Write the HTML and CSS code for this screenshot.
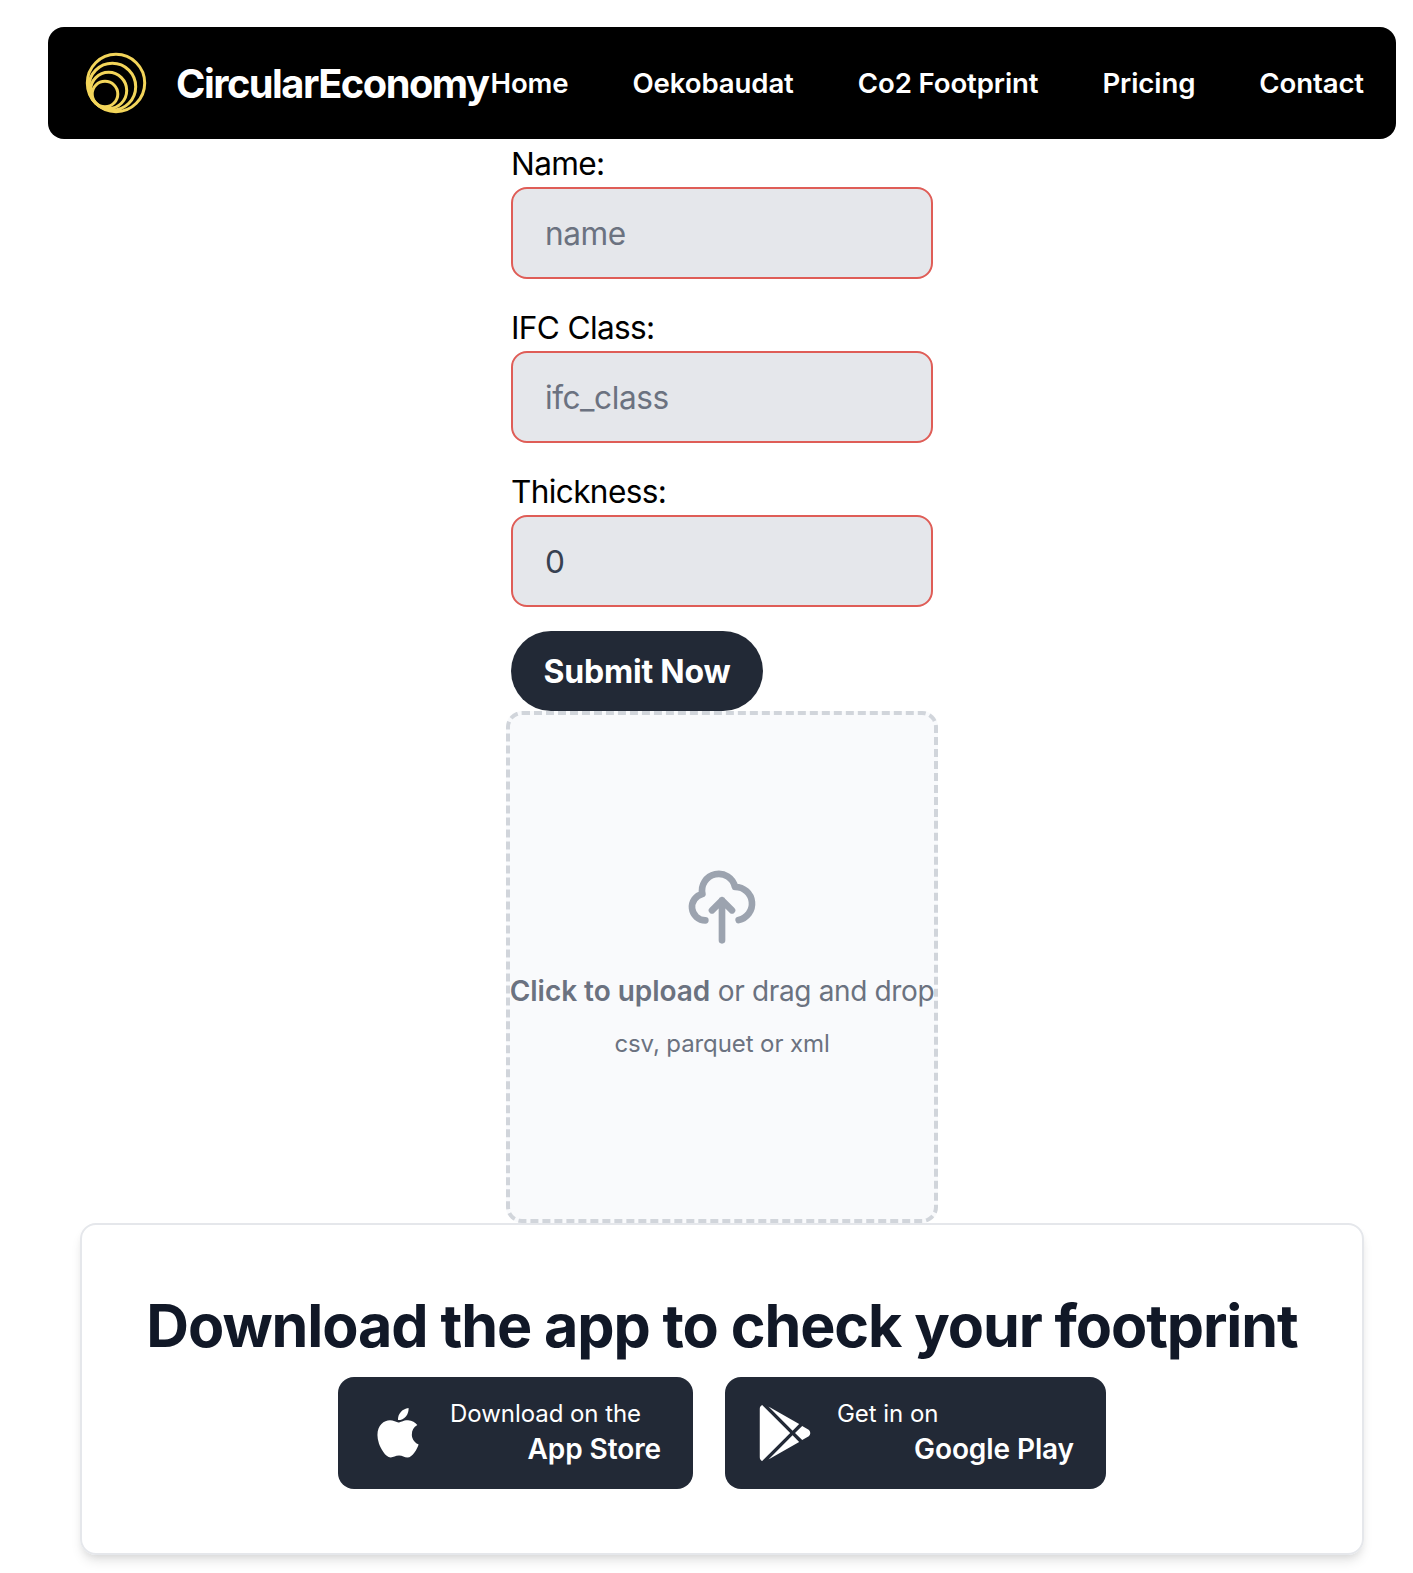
FILE: index.html
```
<!DOCTYPE html>
<html lang="en">
<head>
<meta charset="utf-8">
<title>CircularEconomy</title>
<link rel="stylesheet" href="styles.css">
</head>
<body>
<nav class="navbar">
  <a class="brand">
    <svg class="brand-logo" viewBox="0 0 68 68" fill="none" stroke="#f3d55a" stroke-width="3">
      <circle cx="34" cy="34" r="28.7"/>
      <circle cx="30.3" cy="37.7" r="23.4"/>
      <circle cx="26.6" cy="41.4" r="18.1"/>
      <circle cx="23" cy="45" r="12.8"/>
    </svg>
    <span class="brand-name">CircularEconomy</span>
  </a>
  <div class="menu">
    <a>Home</a><a>Oekobaudat</a><a>Co2 Footprint</a><a>Pricing</a><a>Contact</a>
  </div>
</nav>
<main>
  <form class="form">
    <label class="label" for="name">Name:</label>
    <input class="field" id="name" type="text" placeholder="name">
    <label class="label" for="ifc">IFC Class:</label>
    <input class="field" id="ifc" type="text" placeholder="ifc_class">
    <label class="label" for="thickness">Thickness:</label>
    <input class="field" id="thickness" type="text" value="0">
    <button class="submit" type="button">Submit Now</button>
  </form>
  <div class="dropzone">
    <svg class="cloud" viewBox="0 0 24 24" fill="none" stroke="#9ca3af" stroke-width="2" stroke-linecap="round" stroke-linejoin="round"><path d="M7 16a4 4 0 01-.88-7.903A5 5 0 1115.9 6L16 6a5 5 0 011 9.9M15 13l-3-3m0 0l-3 3m3-3v12"/></svg>
    <p class="hint"><b>Click to upload</b> or drag and drop</p>
    <p class="formats">csv, parquet or xml</p>
  </div>
  <section class="card">
    <h2 class="title">Download the app to check your footprint</h2>
    <div class="stores">
      <a class="store">
        <svg class="store-icon" viewBox="0 0 384 512" fill="currentColor"><path d="M318.7 268.7c-.2-36.7 16.4-64.4 50-84.8-18.8-26.9-47.2-41.7-84.7-44.6-35.5-2.8-74.3 20.7-88.5 20.7-15 0-49.4-19.7-76.4-19.7C63.3 141.2 4 184.8 4 273.5q0 39.3 14.4 81.2c12.8 36.7 59 126.7 107.2 125.2 25.2-.6 43-17.9 75.8-17.9 31.8 0 48.3 17.9 76.4 17.9 48.6-.7 90.4-82.5 102.6-119.3-65.2-30.7-61.7-90-61.7-91.9z"/><path d="M192 138C188 84 228 34 289 27C292 86 252 138 192 138z"/></svg>
        <span class="store-text"><span class="store-small">Download on the</span><span class="store-name">App Store</span></span>
      </a>
      <a class="store">
        <svg class="store-icon" viewBox="0 0 512 512" fill="currentColor"><path d="M325.3 234.3L104.6 13l280.8 161.2-60.1 60.1zM47 0C34 6.8 25.3 19.2 25.3 35.3v441.3c0 16.1 8.7 28.5 21.7 35.3l256.6-256L47 0zm425.2 225.6l-58.9-34.1-65.7 64.5 65.7 64.5 60.1-34.1c18-14.3 18-46.5-1.2-60.8zM104.6 499l280.8-161.2-60.1-60.1L104.6 499z"/></svg>
        <span class="store-text"><span class="store-small">Get in on</span><span class="store-name">Google Play</span></span>
      </a>
    </div>
  </section>
</main>
</body>
</html>
```
FILE: styles.css
```
* { box-sizing: border-box; margin: 0; }
html { overflow: hidden; }
body {
  width: 1413px;
  height: 1573px;
  padding: 27px 17px 0 48px;
  overflow: hidden;
  background: #fff;
  color: #000;
  font-family: Inter, "Liberation Sans", sans-serif;
  font-size: 32px;
  line-height: 48px;
}
.navbar {
  display: flex;
  align-items: center;
  justify-content: space-between;
  height: 112px;
  padding: 0 32px 0 34px;
  border-radius: 16px;
  background: #000;
  color: #fff;
  white-space: nowrap;
}
.brand { display: flex; align-items: center; gap: 26px; width: 406px; }
.brand-logo { width: 68px; height: 68px; flex: none; }
.brand-name { padding-top: 2px; font-size: 39.8px; font-weight: 650; letter-spacing: -1.52px; }
.menu { display: flex; gap: 64px; font-size: 27.6px; font-weight: 560; letter-spacing: -0.12px; }
main { display: flex; flex-direction: column; align-items: center; }
.form { display: flex; flex-direction: column; width: 422px; }
.label { height: 48px; padding-top: 1px; letter-spacing: -0.65px; font-size: 31.6px; }
.field {
  width: 100%;
  height: 92px;
  margin-bottom: 24px;
  padding: 0 32px;
  border: 2px solid #df5d57;
  border-radius: 16px;
  outline: none;
  background: #e5e7eb;
  color: #374151;
  font: inherit;
  font-size: 31.6px;
  letter-spacing: -0.45px;
}
.field::placeholder { color: #6b7280; opacity: 1; }
.submit {
  align-self: flex-start;
  width: 252px;
  height: 80px;
  padding: 2px 0 0;
  border: 0;
  border-radius: 40px;
  background: #222936;
  color: #fff;
  font: inherit;
  font-weight: 700;
  letter-spacing: -0.2px;
}
.dropzone {
  display: flex;
  flex-direction: column;
  align-items: center;
  justify-content: center;
  width: 432px;
  height: 512px;
  padding-bottom: 8px;
  border: 4px dashed #d1d5db;
  border-radius: 16px;
  background: #f9fafc;
  color: #6b7280;
  white-space: nowrap;
}
.cloud { width: 80px; height: 80px; margin-bottom: 24px; }
.hint { margin-bottom: 17px; font-size: 28px; line-height: 40px; letter-spacing: -0.35px; }
.hint b { font-weight: 600; letter-spacing: -0.04px; }
.formats { font-size: 24px; line-height: 32px; letter-spacing: -0.1px; }
.card {
  display: flex;
  flex-direction: column;
  align-items: center;
  width: 1284px;
  height: 332px;
  padding-top: 65px;
  border: 2px solid #e5e7eb;
  border-radius: 16px;
  box-shadow: 0 8px 12px -2px rgba(0, 0, 0, .1), 0 4px 8px -4px rgba(0, 0, 0, .1);
}
.title {
  margin-bottom: 15px;
  color: #111827;
  font-size: 59.2px;
  font-weight: 700;
  line-height: 72px;
  letter-spacing: -1.1px;
  white-space: nowrap;
}
.stores { display: flex; gap: 32px; }
.store {
  display: flex;
  align-items: center;
  gap: 24px;
  height: 112px;
  padding: 0 32px;
  border-radius: 16px;
  background: #222936;
  color: #fff;
}
.store-icon { width: 56px; height: 56px; }
.store-text { display: flex; flex: 1; flex-direction: column; padding-top: 5px; }
.store-small { font-size: 24px; line-height: 24px; margin-bottom: 3px; letter-spacing: -0.05px; }
.store-name { align-self: flex-end; font-size: 28px; line-height: 40px; font-weight: 600; letter-spacing: -0.1px; }
.store:first-child { width: 355px; }
.store:last-child { width: 381px; }
```
